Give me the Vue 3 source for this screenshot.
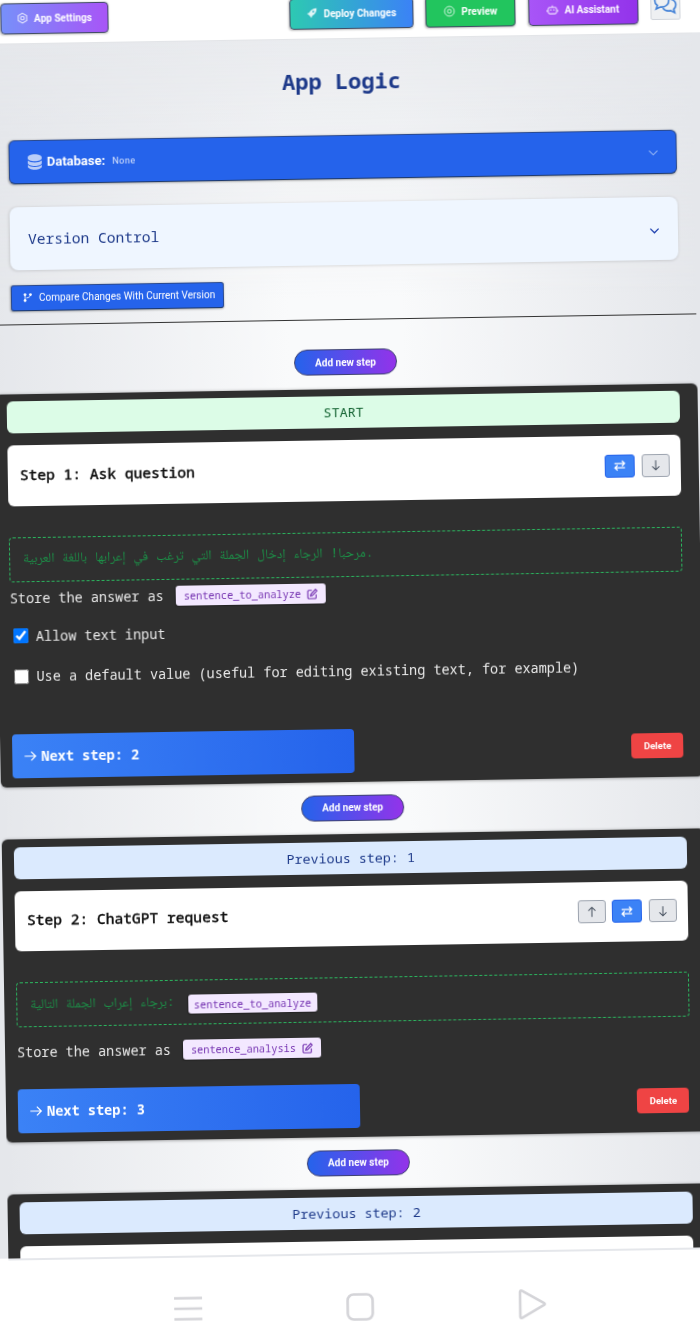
<script setup>
const steps = [
  {
    id: 1,
    banner: 'START',
    start: true,
    title: 'Step 1: Ask question',
    prompt: 'مرحبا! الرجاء إدخال الجملة التي ترغب في إعرابها باللغة العربية.',
    promptVar: '',
    store: 'sentence_to_analyze',
    checks: true,
    next: 2,
    up: false
  },
  {
    id: 2,
    banner: 'Previous step: 1',
    title: 'Step 2: ChatGPT request',
    prompt: 'برجاء إعراب الجملة التالية:',
    promptVar: 'sentence_to_analyze',
    store: 'sentence_analysis',
    checks: false,
    next: 3,
    up: true
  },
  {
    id: 3,
    banner: 'Previous step: 2',
    title: '',
    up: true,
    partial: true
  }
]
</script>

<template>
  <div class="screen">
    <div class="page">
      <header class="topbar">
        <button class="top-btn settings">
          <svg viewBox="0 0 16 16" class="ic"><path d="M8 1.500l5.600 3.200v6.600L8 14.500l-5.600-3.200V4.700z" fill="none" stroke="currentColor" stroke-width="1.400"/><circle cx="8" cy="8" r="2.400" fill="none" stroke="currentColor" stroke-width="1.400"/></svg>
          App Settings
        </button>
        <div class="top-right">
          <button class="top-btn deploy">
            <svg viewBox="0 0 16 16" class="ic"><path d="M15 1c-4.500 0-8 2-10 6l-3 1 2 1.500 2.500 2.500L8 14l1-3c4-2 6-5.500 6-10z" fill="currentColor"/><circle cx="10.500" cy="5.500" r="1.300" fill="#2aa7c8"/></svg>
            Deploy Changes
          </button>
          <button class="top-btn preview">
            <svg viewBox="0 0 16 16" class="ic"><circle cx="8" cy="8" r="6.500" fill="none" stroke="currentColor" stroke-width="1.200"/><circle cx="8" cy="8" r="2.600" fill="none" stroke="currentColor" stroke-width="1.200"/></svg>
            Preview
          </button>
          <button class="top-btn assistant">
            <svg viewBox="0 0 16 16" class="ic"><rect x="2.500" y="5" width="11" height="8.500" rx="2" fill="none" stroke="currentColor" stroke-width="1.400"/><path d="M8 5V2.500M1 8.500v2.500M15 8.500v2.500" stroke="currentColor" stroke-width="1.400" fill="none"/><circle cx="6" cy="8.500" r="1" fill="currentColor"/><circle cx="10" cy="8.500" r="1" fill="currentColor"/></svg>
            AI Assistant
          </button>
          <button class="chat-btn">
            <svg viewBox="0 0 26 26" class="chat-ic"><path d="M9.500 1.500c-4 0-7 2.700-7 6.200 0 2 .9 3.700 2.500 4.800L3.800 16l4.200-2c.5.100 1 .100 1.500.100 4 0 7-2.800 7-6.400s-3-6.200-7-6.200z" fill="none" stroke="currentColor" stroke-width="1.600"/><path d="M19 6.500c2.700.9 4.500 3 4.500 5.600 0 1.800-.8 3.300-2.200 4.400l1 3.500-4.100-2.100c-3 .6-6.200-.3-7.700-2.800" fill="none" stroke="currentColor" stroke-width="1.600"/></svg>
          </button>
        </div>
      </header>

      <main class="main">
        <section class="head">
          <h1>App Logic</h1>
          <div class="db-bar">
            <svg viewBox="0 0 14 16" class="db-ic"><path d="M0 3.500C0 1.600 3.100.3 7 .3s7 1.300 7 3.200v.7C14 6 10.900 7.300 7 7.300S0 6 0 4.200zM0 6.500c1.400 1.200 4 1.900 7 1.900s5.600-.7 7-1.900v2.400c0 1.800-3.100 3.100-7 3.100s-7-1.300-7-3.100zM0 11c1.400 1.200 4 1.900 7 1.900s5.600-.7 7-1.900v1.500c0 1.900-3.100 3.200-7 3.200s-7-1.300-7-3.200z" fill="currentColor"/></svg>
            <strong>Database:</strong>
            <span class="none">None</span>
            <svg viewBox="0 0 12 12" class="chev db-chev"><path d="M1.500 4l4.500 4.500L10.500 4" fill="none" stroke="currentColor" stroke-width="1.200"/></svg>
          </div>
          <div class="vc-bar">
            <span>Version Control</span>
            <svg viewBox="0 0 12 12" class="chev vc-chev"><path d="M1.500 4l4.500 4.500L10.500 4" fill="none" stroke="currentColor" stroke-width="1.400"/></svg>
          </div>
          <button class="compare">
            <svg viewBox="0 0 12 12" class="cmp-ic"><circle cx="2.500" cy="2.500" r="1.700" fill="currentColor"/><circle cx="2.500" cy="9.500" r="1.700" fill="currentColor"/><circle cx="9" cy="2.500" r="1.700" fill="currentColor"/><path d="M2.500 3v6M9 3c0 2-2 3-5 3.500" fill="none" stroke="currentColor" stroke-width="1"/></svg>
            Compare Changes With Current Version
          </button>
        </section>
        <div class="divider"></div>

        <template v-for="step in steps" :key="step.id">
          <div class="add-row"><button class="add-btn">Add new step</button></div>
          <section class="card">
            <div class="banner" :class="{ start: step.start }">{{ step.banner }}</div>
            <div class="step-head">
              <span class="step-title">{{ step.title }}</span>
              <div v-if="!step.partial" class="step-tools">
                <button v-if="step.up" class="tool">
                  <svg viewBox="0 0 16 16"><path d="M8 13.500V3M4 6.500L8 2.500l4 4" fill="none" stroke="currentColor" stroke-width="1.200"/></svg>
                </button>
                <button class="tool swap">
                  <svg viewBox="0 0 16 16"><path d="M2 5.500h11M10.500 2.500l3 3-3 3M14 10.500H3M5.500 7.500l-3 3 3 3" fill="none" stroke="currentColor" stroke-width="1.500"/></svg>
                </button>
                <button class="tool">
                  <svg viewBox="0 0 16 16"><path d="M8 2.500V13M4 9.500l4 4 4-4" fill="none" stroke="currentColor" stroke-width="1.200"/></svg>
                </button>
              </div>
            </div>

            <template v-if="!step.partial">
              <div class="prompt" :class="{ 'with-var': step.promptVar }">
                <span class="prompt-text">{{ step.prompt }}</span>
                <span v-if="step.promptVar" class="chip var">{{ step.promptVar }}</span>
              </div>
              <div class="store">
                <span>Store the answer as</span>
                <span class="chip">
                  {{ step.store }}
                  <svg viewBox="0 0 16 16" class="edit-ic"><path d="M7.500 2.500H3A1.500 1.500 0 0 0 1.500 4v9A1.500 1.500 0 0 0 3 14.500h9a1.500 1.500 0 0 0 1.500-1.500V8.500" fill="none" stroke="currentColor" stroke-width="1.600"/><path d="M12.800 1.300l2 2L8 10l-2.600.6L6 8z" fill="none" stroke="currentColor" stroke-width="1.600"/></svg>
                </span>
              </div>
              <template v-if="step.checks">
                <label class="check first"><input type="checkbox" checked />Allow text input</label>
                <label class="check second"><input type="checkbox" />Use a default value (useful for editing existing text, for example)</label>
              </template>
              <div class="foot" :class="{ tall: step.checks }">
                <button class="next">
                  <svg viewBox="0 0 16 16" class="arrow"><path d="M1.500 8H14M9 3l5 5-5 5" fill="none" stroke="currentColor" stroke-width="1.400"/></svg>
                  Next step: {{ step.next }}
                </button>
                <button class="delete">Delete</button>
              </div>
            </template>
          </section>
        </template>
      </main>

      <nav class="navbar">
        <svg viewBox="0 0 28 24" class="nav-ic"><path d="M0 1.500h28M0 12h28M0 22.500h28" fill="none" stroke="currentColor" stroke-width="2.600"/></svg>
        <svg viewBox="0 0 28 28" class="nav-ic home"><rect x="1.500" y="1.500" width="25" height="25" rx="6" fill="none" stroke="currentColor" stroke-width="2.600"/></svg>
        <svg viewBox="0 0 28 30" class="nav-ic tri"><path d="M2 2.500c0-1 1-1.500 1.800-1L26 14c.8.500.8 1.500 0 2L3.800 28.500c-.8.500-1.800 0-1.800-1z" fill="none" stroke="currentColor" stroke-width="2.600"/></svg>
      </nav>
    </div>
  </div>
</template>

<style>
html, body {
  margin: 0;
  background: #fff;
}
</style>

<style scoped>
.screen {
  width: 700px;
  height: 1342px;
  overflow: hidden;
  background: #fff;
}
.page {
  width: 703px;
  height: 1380px;
  margin: -10px 0 0 -1px;
  display: flex;
  flex-direction: column;
  transform: rotate(-0.92deg);
  transform-origin: 351px 681px;
  font-family: "Noto Sans Mono", "DejaVu Sans Mono", monospace;
  filter: blur(0.5px);
}
button {
  font: inherit;
  padding: 0;
  cursor: pointer;
}
.topbar {
  height: 47.500px;
  flex: none;
  background: #fff;
  display: flex;
  justify-content: space-between;
  align-items: flex-end;
  padding: 0 11px 9px 11.500px;
  box-sizing: border-box;
  box-shadow: 20px 0 0 #fff, -20px 0 0 #fff;
}
.top-right {
  display: flex;
  gap: 12.500px;
  align-items: flex-start;
}
.top-btn {
  height: 31px;
  display: flex;
  align-items: center;
  justify-content: center;
  gap: 6px;
  color: #fff;
  border: 1px solid #3f4a63;
  border-radius: 4px;
  font-family: Roboto, sans-serif;
  font-size: 10px;
  font-weight: 700;
  box-shadow: 0 1px 2px rgba(0, 0, 0, 0.25);
}
.settings {
  width: 108px;
  background: linear-gradient(90deg, #7790f9, #a855f7);
}
.deploy {
  width: 124px;
  background: linear-gradient(90deg, #2dc9b2, #3b82f6);
}
.preview {
  width: 90px;
  background: #22c55e;
}
.assistant {
  width: 110px;
  background: linear-gradient(90deg, #a855f7, #9333ea);
}
.ic {
  width: 12px;
  height: 12px;
  opacity: 0.85;
}
.chat-btn {
  width: 30px;
  height: 27px;
  background: #eef0f2;
  border: 1px solid #d1d5db;
  border-radius: 2px;
  color: #3f7fd6;
  display: flex;
  align-items: center;
  justify-content: center;
}
.chat-ic {
  width: 26px;
  height: 26px;
}
.main {
  height: 1215.500px;
  flex: none;
  overflow: hidden;
  box-sizing: border-box;
  border-top: 1.500px solid #e3e5e8;
  background:
    linear-gradient(180deg, rgba(229, 231, 235, 0.75), rgba(229, 231, 235, 0) 260px),
    linear-gradient(90deg, #e5e7eb 0%, #f9fafb 42%, #f9fafb 58%, #e5e7eb 100%);
  box-shadow: 20px 0 0 #e5e7eb, -20px 0 0 #e5e7eb;
}
.head {
  padding: 0 17px 0 18px;
  display: flex;
  flex-direction: column;
}
h1 {
  margin: 26px 0 0;
  font-size: 22px;
  line-height: 30px;
  font-weight: 700;
  text-align: center;
  color: #1e3a8a;
}
.db-bar {
  margin-top: 40px;
  height: 44px;
  display: flex;
  align-items: center;
  padding: 0 17px 0 18px;
  background: #2563eb;
  color: #fff;
  border-radius: 6px;
  border: 1px solid #2a4a90;
  border-bottom: 1.500px solid #1e3a6e;
  box-sizing: border-box;
  font-family: Roboto, sans-serif;
  font-size: 13px;
  box-shadow: 0 1px 2px rgba(0, 0, 0, 0.3);
}
.db-ic {
  width: 14px;
  height: 16px;
  margin-right: 5px;
  color: #b9cdf8;
}
.none {
  margin-left: 7px;
  font-size: 9px;
  letter-spacing: 0.5px;
  opacity: 0.85;
}
.chev {
  margin-left: auto;
  width: 11px;
  height: 11px;
}
.db-chev {
  color: #93b4f5;
  margin-top: 2px;
}
.vc-bar {
  margin-top: 23px;
  height: 63px;
  display: flex;
  align-items: center;
  padding: 0 18px;
  box-sizing: border-box;
  background: #eff6ff;
  border-radius: 8px;
  color: #1e3a8a;
  font-size: 14.600px;
  box-shadow: 0 1px 3px rgba(0, 0, 0, 0.12);
}
.vc-chev {
  color: #1e40af;
  margin-top: 4px;
}
.compare {
  margin-top: 15px;
  width: 213px;
  height: 26px;
  display: flex;
  align-items: center;
  gap: 6px;
  padding-left: 11px;
  background: #2563eb;
  color: #fff;
  border: 1px solid #2a4a90;
  border-bottom: 1.500px solid #1e3a6e;
  border-radius: 3px;
  font-family: Roboto, sans-serif;
  font-size: 10px;
  box-shadow: 0 1px 2px rgba(0, 0, 0, 0.3);
  box-sizing: border-box;
}
.cmp-ic {
  width: 10px;
  height: 11px;
}
.divider {
  margin-top: 13px;
  height: 1.500px;
  background: #333;
}
.add-row {
  display: flex;
  justify-content: center;
  margin: 13px 0 13.500px;
}
.divider + .add-row {
  margin-top: 29px;
}
.add-btn {
  width: 103px;
  height: 26px;
  color: #fff;
  border: 1px solid #3b3f70;
  border-radius: 13px;
  background: linear-gradient(90deg, #2563eb, #9333ea);
  font-family: Roboto, sans-serif;
  font-size: 10px;
  font-weight: 700;
  box-sizing: border-box;
}
.card {
  background: #2f2f2f;
  border-radius: 6px;
  padding: 7.500px 17.600px 9px 12px;
  box-shadow: 0 1px 3px rgba(0, 0, 0, 0.3);
}
.banner {
  height: 32px;
  line-height: 32px;
  text-align: center;
  border-radius: 6px;
  font-size: 13.400px;
  color: #1e3a8a;
  background: #dbeafe;
}
.banner.start {
  color: #166534;
  background: #dcfce7;
}
.step-head {
  margin-top: 12px;
  height: 60.500px;
  display: flex;
  align-items: center;
  justify-content: space-between;
  background: #fff;
  border-radius: 6px;
  padding: 0 11.500px 0 12px;
  box-sizing: border-box;
}
.step-title {
  margin-top: -3px;
  font-size: 14.600px;
  font-weight: 500;
  color: #111;
  -webkit-text-stroke: 0.3px #111;
}
.step-tools {
  display: flex;
  gap: 6.500px;
}
.tool {
  width: 28px;
  height: 23px;
  display: flex;
  align-items: center;
  justify-content: center;
  background: #e5e7eb;
  border: 1px solid #9ca3af;
  border-radius: 3px;
  color: #4b5563;
  box-sizing: border-box;
}
.tool svg {
  width: 14px;
  height: 14px;
}
.tool.swap {
  background: #3b82f6;
  border-color: #2563eb;
  color: #fff;
  width: 30px;
}
.prompt {
  margin-top: 31px;
  height: 45px;
  display: flex;
  align-items: center;
  gap: 13px;
  padding: 0 13px;
  box-sizing: border-box;
  border: 1.200px dashed #2bb75f;
  border-radius: 4px;
  color: #1f9d4d;
  font-size: 13.300px;
}
.prompt-text {
  font-family: "Noto Sans Mono", "Noto Naskh Arabic", monospace;
  color: #1c9148;
}
.prompt.with-var {
  margin-bottom: 15px;
}
.chip {
  display: inline-flex;
  align-items: center;
  gap: 6px;
  height: 20px;
  padding: 0 8px 0 8px;
  box-sizing: border-box;
  border-radius: 3px;
  background: #f3e8ff;
  color: #7330b0;
  font-size: 10.300px;
  box-shadow: 0 1px 1px rgba(0, 0, 0, 0.25);
}
.chip.var {
  height: 19px;
  margin-top: 4px;
  padding: 0 6px;
}
.edit-ic {
  width: 11px;
  height: 11px;
}
.store {
  margin-top: 6.500px;
  height: 20px;
  display: flex;
  align-items: center;
  gap: 12px;
  color: #e9e9e9;
  font-size: 13.500px;
}
.check {
  display: flex;
  align-items: center;
  gap: 8px;
  height: 20px;
  padding-left: 2.500px;
  color: #e9e9e9;
  font-size: 13.500px;
}
.check input {
  width: 15px;
  height: 15px;
  margin: 0;
  flex: none;
}
.check.first {
  margin-top: 17.500px;
}
.check.second {
  margin-top: 20.500px;
}
.foot {
  margin-top: 26.500px;
  display: flex;
  align-items: center;
  justify-content: space-between;
}
.foot.tall {
  margin-top: 47.600px;
}
.next {
  width: 342px;
  height: 44px;
  display: flex;
  align-items: center;
  gap: 4px;
  padding-left: 11px;
  color: #fff;
  border: 0;
  border-radius: 4px;
  background: linear-gradient(90deg, #3b82f6, #2563eb);
  font-size: 13.600px;
  font-weight: 700;
  box-sizing: border-box;
}
.arrow {
  width: 14px;
  height: 14px;
}
.delete {
  width: 52px;
  height: 25px;
  margin-right: 2px;
  color: #fff;
  border: 0;
  border-radius: 4px;
  background: #ef4444;
  font-family: Roboto, sans-serif;
  font-size: 9.500px;
  font-weight: 700;
}
.navbar {
  flex: 1;
  background: #fff;
  border-top: 2px solid #e5e7eb;
  display: flex;
  justify-content: center;
  align-items: flex-start;
  gap: 144px;
  padding-top: 39px;
  padding-right: 2px;
  color: #d4d4d8;
  box-shadow: 20px 0 0 #fff, -20px 0 0 #fff;
}
.nav-ic {
  width: 28px;
  height: 24px;
}
.home {
  height: 28px;
  margin-top: -1px;
}
.tri {
  height: 30px;
  margin-top: -2px;
}
</style>
